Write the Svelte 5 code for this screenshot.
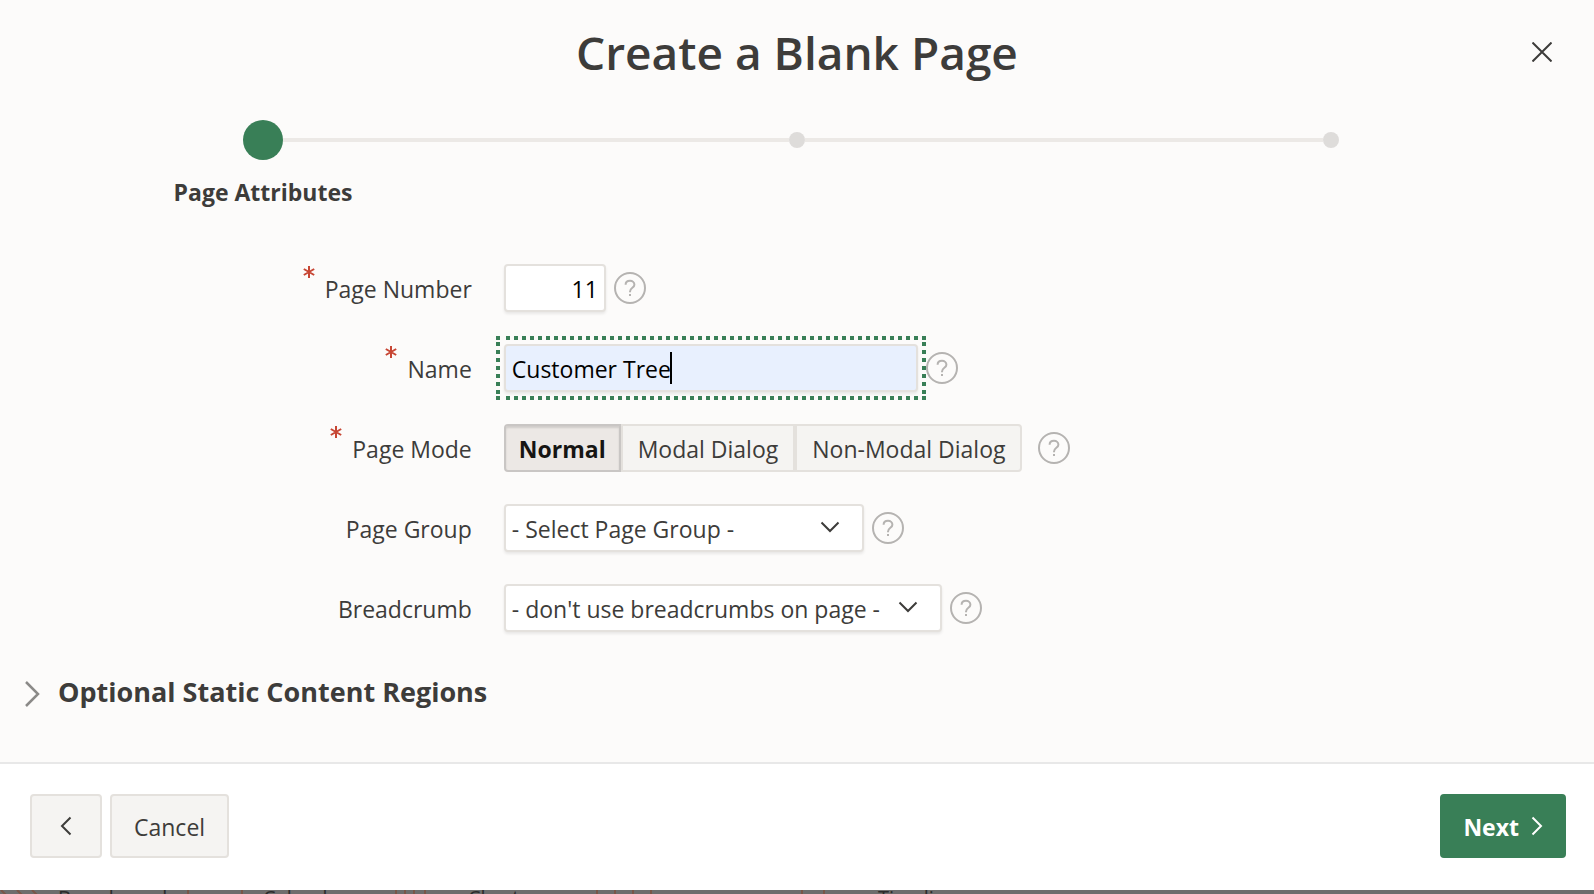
<script>
  const steps = ['Page Attributes', '', ''];
  const modes = ['Normal', 'Modal Dialog', 'Non-Modal Dialog'];
  let pageNumber = $state('11');
  let name = $state('Customer Tree');
  let mode = $state('Normal');
</script>

{#snippet required()}
  <svg class="required" viewBox="0 0 12 12" aria-label="required">
    <path d="M6 0v12M.8 3l10.4 6M11.2 3L.8 9" />
  </svg>
{/snippet}

{#snippet help(label)}
  <button class="help" type="button" aria-label={label}>
    <svg viewBox="0 0 32 32">
      <circle cx="16" cy="16" r="15" />
      <path d="M11.6 12.8C11.6 10.3 13.5 8.800 16 8.800s4.4 1.6 4.4 3.9c0 3.3-4.4 3-4.4 7v.5" />
      <path d="M16 22v2" />
    </svg>
  </button>
{/snippet}

{#snippet chevron()}
  <svg class="chevron" viewBox="0 0 20 12"><path d="M1.500 1.500L10 10l8.500-8.500" /></svg>
{/snippet}

<div class="page">
  <form class="dialog" onsubmit={(e) => e.preventDefault()}>
    <header>
      <h1>Create a Blank Page</h1>
      <button class="close" type="button" aria-label="Close">
        <svg viewBox="0 0 20 20"><path d="M.5.5l19 19M19.500.5l-19 19" /></svg>
      </button>
    </header>

    <main>
      <ol class="steps">
        {#each steps as step, i}
          <li class:current={i === 0}>
            <span class="marker"><span class="dot"></span></span>
            <span class="step-label">{step}</span>
          </li>
        {/each}
      </ol>

      <div class="fields">
        <div class="row">
          <label for="number">{@render required()}<span>Page Number</span></label>
          <div class="control">
            <input id="number" class="box number" type="text" bind:value={pageNumber} />
            {@render help('Help for Page Number')}
          </div>
        </div>
        <div class="row">
          <label for="name">{@render required()}<span>Name</span></label>
          <div class="control">
            <div class="focused">
              <input id="name" class="box name" type="text" bind:value={name} />
              <span class="caret"></span>
            </div>
            {@render help('Help for Name')}
          </div>
        </div>
        <div class="row">
          <span class="label" id="mode-label">{@render required()}<span>Page Mode</span></span>
          <div class="control wide">
            <div class="segments" role="radiogroup" aria-labelledby="mode-label">
              {#each modes as item}
                <label class="segment" class:selected={mode === item}>
                  <input type="radio" name="mode" value={item} bind:group={mode} />
                  {item}
                </label>
              {/each}
            </div>
            {@render help('Help for Page Mode')}
          </div>
        </div>
        <div class="row">
          <label for="group"><span>Page Group</span></label>
          <div class="control">
            <div class="select group">
              <select id="group" class="box"><option>- Select Page Group -</option></select>
              {@render chevron()}
            </div>
            {@render help('Help for Page Group')}
          </div>
        </div>
        <div class="row">
          <label for="breadcrumb"><span>Breadcrumb</span></label>
          <div class="control">
            <div class="select breadcrumb">
              <select id="breadcrumb" class="box"><option>- don't use breadcrumbs on page -</option></select>
              {@render chevron()}
            </div>
            {@render help('Help for Breadcrumb')}
          </div>
        </div>
      </div>

      <h2>
        <button class="region" type="button" aria-expanded="false">
          <svg viewBox="0 0 16 28"><path d="M2 2l12 12L2 26" /></svg>
          <span>Optional Static Content Regions</span>
        </button>
      </h2>
    </main>

    <footer>
      <button class="button back" type="button" aria-label="Back">
        <svg viewBox="0 0 12 20"><path d="M10.500 1.500L2 10l8.500 8.500" /></svg>
      </button>
      <button class="button" type="button"><span>Cancel</span></button>
      <button class="button next" type="submit">
        <span>Next</span>
        <svg viewBox="0 0 12 20"><path d="M1.500 1.500L10 10l-8.500 8.500" /></svg>
      </button>
    </footer>
  </form>

  <div class="backdrop" aria-hidden="true">
    <svg viewBox="0 0 1594 4" preserveAspectRatio="xMinYMin slice">
      <path d="M1 0l5 5M17 0l5 5M32 0l5 5M188 0v4M242 0v4M396 0v4M405 0v4M414 0v4M425 0v4M597 0v4M615 0v4M633 0v4M651 0v4M802 0v4M824 0v4" />
    </svg>
    <span class="b">Breadcrumb</span>
    <span class="c">Calendar</span>
    <span class="d">Chart</span>
    <span class="e">Timeline</span>
  </div>
</div>

<style>
  :global(body) {
    margin: 0;
    background: #fcfbfa;
  }

  .page,
  .page button,
  .page input,
  .page select {
    font-family: 'Open Sans', 'Noto Sans', sans-serif;
    font-size: 23px;
    line-height: 32px;
    color: #3d3c3a;
  }

  .page {
    display: flex;
    flex-direction: column;
    min-height: 100vh;
    overflow: hidden;
  }

  .page * {
    box-sizing: border-box;
  }

  svg {
    display: block;
    flex: none;
    fill: none;
    stroke: currentColor;
    stroke-width: 2;
  }

  button {
    margin: 0;
    padding: 0;
    border: 0;
    background: none;
  }

  .dialog {
    flex: 1;
    display: flex;
    flex-direction: column;
    background: #fcfbfa;
  }

  header {
    display: grid;
    grid-template-columns: 1fr auto 1fr;
    align-items: center;
    padding: 20px 40px 0;
  }

  h1 {
    grid-column: 2;
    margin: 0;
    font-size: 46px;
    line-height: 64px;
    font-weight: 600;
  }

  .close {
    justify-self: end;
    padding: 2px;
  }

  .close svg {
    width: 20px;
    height: 20px;
  }

  main {
    flex: 1;
  }

  .steps {
    display: grid;
    grid-template-columns: repeat(3, 1fr);
    margin: 36px -4px 0;
    padding: 0;
    list-style: none;
  }

  .steps li {
    display: flex;
    flex-direction: column;
    align-items: center;
    gap: 16px;
  }

  .marker {
    display: flex;
    align-self: stretch;
    align-items: center;
    justify-content: center;
    height: 40px;
  }

  .marker::before,
  .marker::after {
    content: '';
    flex: 1;
    height: 4px;
    background: #ece9e6;
  }

  li:first-child .marker::before,
  li:last-child .marker::after {
    background: none;
  }

  .dot {
    width: 16px;
    height: 16px;
    border-radius: 50%;
    background: #dedcda;
  }

  .current .dot {
    width: 40px;
    height: 40px;
    background: #397f57;
  }

  .step-label {
    font-weight: 700;
  }

  .fields {
    display: flex;
    flex-direction: column;
    gap: 32px;
    padding: 56px 8px 0;
  }

  .row {
    display: grid;
    grid-template-columns: 3fr 7fr;
    column-gap: 32px;
    min-height: 48px;
  }

  .row > label,
  .label {
    display: flex;
    justify-content: flex-end;
    align-items: center;
    gap: 10px;
    padding-top: 2px;
  }

  .required {
    align-self: flex-start;
    width: 12px;
    height: 12px;
    color: #c74634;
  }

  .control {
    display: flex;
    align-items: center;
    gap: 8px;
  }

  .wide {
    gap: 16px;
  }

  .box {
    display: block;
    height: 48px;
    margin: 0;
    padding: 2px 6px 0;
    border: 2px solid #e4e1dd;
    border-radius: 4px;
    background: #fff;
    box-shadow: 0 2px 3px rgba(0, 0, 0, 0.08);
    outline: none;
  }

  .page .box.number,
  .page .box.name {
    color: #000;
  }

  .number {
    width: 102px;
    text-align: right;
  }

  .focused {
    position: relative;
  }

  .name {
    width: 414px;
    background: #e8f0fe;
  }

  /* Square-dotted focus ring around the active text field */
  .focused::before {
    content: '';
    position: absolute;
    inset: -8px;
    pointer-events: none;
    --dash: #397f57 0 4px, transparent 4px 8px;
    --blank: linear-gradient(#fcfbfa, #fcfbfa);
    background:
      var(--blank) 4px 0 / 4px 4px no-repeat,
      var(--blank) 4px 100% / 4px 4px no-repeat,
      linear-gradient(#397f57, #397f57) 0 0 / 4px 4px no-repeat,
      linear-gradient(#397f57, #397f57) 0 100% / 4px 4px no-repeat,
      linear-gradient(90deg, var(--dash)) 2px 0 / 8px 4px repeat-x,
      linear-gradient(90deg, var(--dash)) 2px 100% / 8px 4px repeat-x,
      linear-gradient(var(--dash)) 0 6px / 4px 8px repeat-y,
      linear-gradient(var(--dash)) 100% 6px / 4px 8px repeat-y;
  }

  .caret {
    position: absolute;
    top: 8px;
    left: 166px;
    width: 2px;
    height: 32px;
    background: #000;
  }

  .page .help {
    color: #b5b3b1;
  }

  .help svg {
    width: 32px;
    height: 32px;
  }

  .segments {
    display: flex;
  }

  .segment {
    position: relative;
    padding: 7px 15px 5px;
    border: 2px solid #e4e1dd;
    background: #f5f4f2;
  }

  .segment:first-child {
    border-radius: 4px 0 0 4px;
  }

  .segment:last-child {
    border-radius: 0 4px 4px 0;
  }

  .segment input {
    position: absolute;
    inset: 0;
    margin: 0;
    opacity: 0;
  }

  .segment.selected {
    padding: 7px 13px 5px;
    border-color: #c9c6c4;
    background: #ece8e5;
    box-shadow: inset 0 2px 2px rgba(0, 0, 0, 0.12);
    color: #161513;
    font-weight: 700;
  }

  .select {
    position: relative;
  }

  .select select {
    width: 100%;
    appearance: none;
  }

  .group {
    width: 360px;
  }

  .breadcrumb {
    width: 438px;
  }

  .chevron {
    position: absolute;
    top: 17px;
    right: 24px;
    width: 20px;
    height: 12px;
    pointer-events: none;
  }

  h2 {
    margin: 40px 24px 0;
    line-height: 40px;
  }

  .page .region {
    display: flex;
    align-items: center;
    gap: 18px;
    font-size: 27px;
    line-height: 40px;
    font-weight: 700;
  }

  .region svg {
    width: 16px;
    height: 28px;
    margin-top: 4px;
    color: #8b8a88;
    stroke-width: 2.5;
  }

  footer {
    display: flex;
    gap: 8px;
    padding: 30px 28px 32px 30px;
    border-top: 2px solid #e8e8e8;
    background: #fff;
  }

  .button {
    display: flex;
    align-items: center;
    justify-content: center;
    gap: 12px;
    height: 64px;
    padding: 0 22px;
    border: 2px solid #e4e1dd;
    border-radius: 4px;
    background: #f5f4f2;
  }

  .button span {
    padding-top: 2px;
  }

  .button svg {
    width: 12px;
    height: 20px;
  }

  .back {
    width: 72px;
  }

  .page .next {
    margin-left: auto;
    padding: 0 21px;
    border-color: #397f57;
    background: #397f57;
    color: #fff;
    font-weight: 700;
  }

  .backdrop {
    position: relative;
    height: 4px;
    overflow: hidden;
    background: #6e6d6d;
  }

  .backdrop svg {
    width: 1594px;
    height: 4px;
    color: #7a5648;
  }

  .backdrop span {
    position: absolute;
    top: -8px;
    font-size: 20px;
    line-height: 32px;
    color: #2b2b2b;
  }

  .b {
    left: 58px;
  }

  .c {
    left: 263px;
  }

  .d {
    left: 468px;
  }

  .e {
    left: 878px;
  }
</style>
